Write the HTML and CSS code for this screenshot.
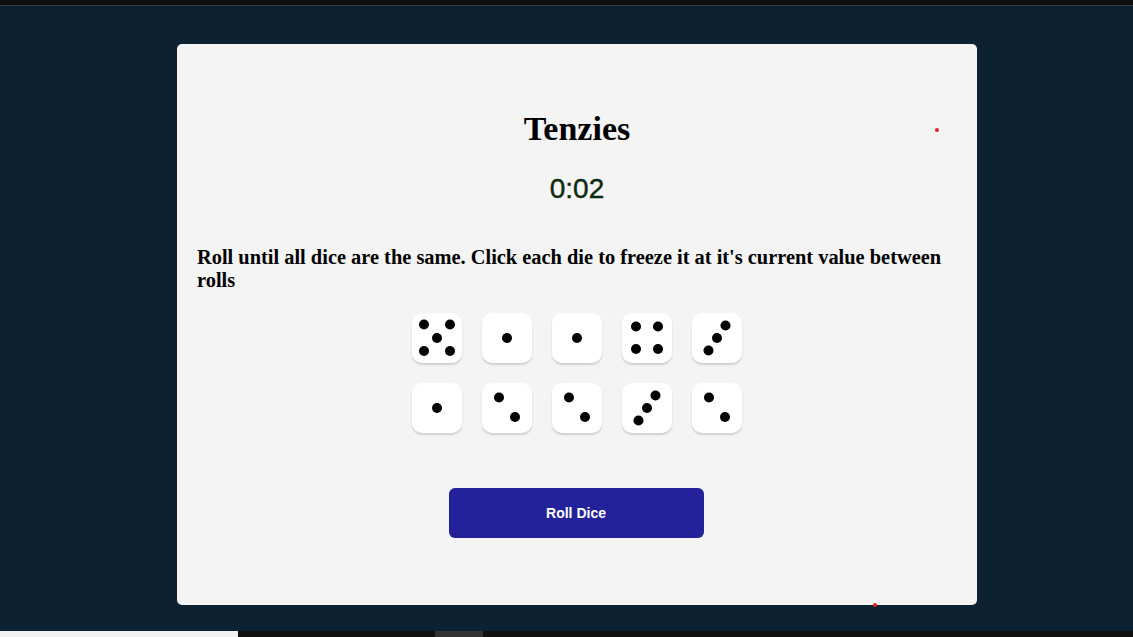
FILE: index.html
```html
<!DOCTYPE html>
<html>
<head>
<meta charset="utf-8">
<title>Tenzies</title>
<link rel="stylesheet" href="styles.css">
</head>
<body>
<div class="topbar"></div>
<div class="stage">
  <main class="card">
    <h1 class="title">Tenzies</h1>
    <div class="timer">0:02</div>
    <p class="instructions">Roll until all dice are the same. Click each die to freeze it at it's current value between rolls</p>
    <div class="dice">
      <div class="die"><svg viewBox="0 0 50 50" width="50" height="50"><circle cx="12" cy="11.5" r="5"/><circle cx="38" cy="11.5" r="5"/><circle cx="25" cy="25" r="5"/><circle cx="12" cy="38" r="5"/><circle cx="38" cy="38" r="5"/></svg></div>
      <div class="die"><svg viewBox="0 0 50 50" width="50" height="50"><circle cx="25" cy="25" r="5"/></svg></div>
      <div class="die"><svg viewBox="0 0 50 50" width="50" height="50"><circle cx="25" cy="25" r="5"/></svg></div>
      <div class="die"><svg viewBox="0 0 50 50" width="50" height="50"><circle cx="14" cy="13.5" r="5"/><circle cx="36" cy="13.5" r="5"/><circle cx="14" cy="36" r="5"/><circle cx="36" cy="36" r="5"/></svg></div>
      <div class="die"><svg viewBox="0 0 50 50" width="50" height="50"><circle cx="33.5" cy="12.5" r="5"/><circle cx="25" cy="25" r="5"/><circle cx="16.5" cy="37.5" r="5"/></svg></div>
      <div class="die"><svg viewBox="0 0 50 50" width="50" height="50"><circle cx="25" cy="25" r="5"/></svg></div>
      <div class="die"><svg viewBox="0 0 50 50" width="50" height="50"><circle cx="17" cy="14.5" r="5"/><circle cx="33" cy="34" r="5"/></svg></div>
      <div class="die"><svg viewBox="0 0 50 50" width="50" height="50"><circle cx="17" cy="14.5" r="5"/><circle cx="33" cy="34" r="5"/></svg></div>
      <div class="die"><svg viewBox="0 0 50 50" width="50" height="50"><circle cx="33.5" cy="12.5" r="5"/><circle cx="25" cy="25" r="5"/><circle cx="16.5" cy="37.5" r="5"/></svg></div>
      <div class="die"><svg viewBox="0 0 50 50" width="50" height="50"><circle cx="17" cy="14.5" r="5"/><circle cx="33" cy="34" r="5"/></svg></div>
    </div>
    <button class="roll">Roll Dice</button>
    <span class="confetti confetti-a"></span>
    <span class="confetti confetti-b"></span>
  </main>
</div>
<div class="bottombar">
  <div class="bb-light"></div>
  <div class="bb-dark"></div>
  <div class="bb-tab"></div>
  <div class="bb-rest"></div>
</div>
</body>
</html>
```

FILE: styles.css
```css
* { box-sizing: border-box; }
html, body { margin: 0; padding: 0; }
body {
  width: 1133px;
  height: 637px;
  overflow: hidden;
  background: #0c2233;
  font-family: "Liberation Serif", "Times New Roman", serif;
  display: flex;
  flex-direction: column;
}
.topbar {
  height: 6px;
  background: #0e0e0e;
  border-bottom: 1px solid #3a3a3a;
  flex: none;
}
.stage {
  flex: 1;
  display: flex;
  justify-content: center;
  padding: 38px 0 0 21px;
}
.card {
  position: relative;
  width: 800px;
  height: 561px;
  background: #f4f4f4;
  border-radius: 5px;
  padding: 0 20px;
  display: flex;
  flex-direction: column;
  align-items: center;
}
.title {
  margin: 66px 0 0;
  font-size: 34px;
  line-height: 38px;
  font-weight: bold;
  color: #000;
}
.timer {
  margin-top: 25px;
  font-family: "Liberation Sans", Arial, sans-serif;
  font-size: 28px;
  line-height: 32px;
  color: #0b2a0f;
  -webkit-text-stroke: 0.4px #0b2a0f;
}
.instructions {
  align-self: stretch;
  margin: 41px 0 0;
  font-size: 20.4px;
  line-height: 23px;
  font-weight: bold;
  color: #000;
}
.dice {
  margin-top: 21px;
  display: grid;
  grid-template-columns: repeat(5, 50px);
  grid-auto-rows: 50px;
  gap: 20px;
}
.die {
  width: 50px;
  height: 50px;
  background: #fff;
  border-radius: 10px;
  box-shadow: 0 2px 2px rgba(0, 0, 0, 0.15);
  display: flex;
}
.die circle { fill: #000; }
.roll {
  margin: 55px 2px 0 0;
  width: 255px;
  height: 50px;
  border: none;
  border-radius: 6px;
  background: #24229a;
  color: #fff;
  font-family: "Liberation Sans", Arial, sans-serif;
  font-weight: bold;
  font-size: 14px;
}
.confetti {
  position: absolute;
  width: 4px;
  height: 4px;
  border-radius: 50%;
  background: #e5231f;
}
.confetti-a { left: 758px; top: 84px; }
.confetti-b { left: 696px; top: 559px; }
.bottombar {
  height: 6px;
  flex: none;
  display: flex;
}
.bb-light { width: 238px; background: #f1f1f1; }
.bb-dark { width: 197px; background: #111; }
.bb-tab { width: 48px; background: #333; }
.bb-rest { flex: 1; background: #111; }
```
